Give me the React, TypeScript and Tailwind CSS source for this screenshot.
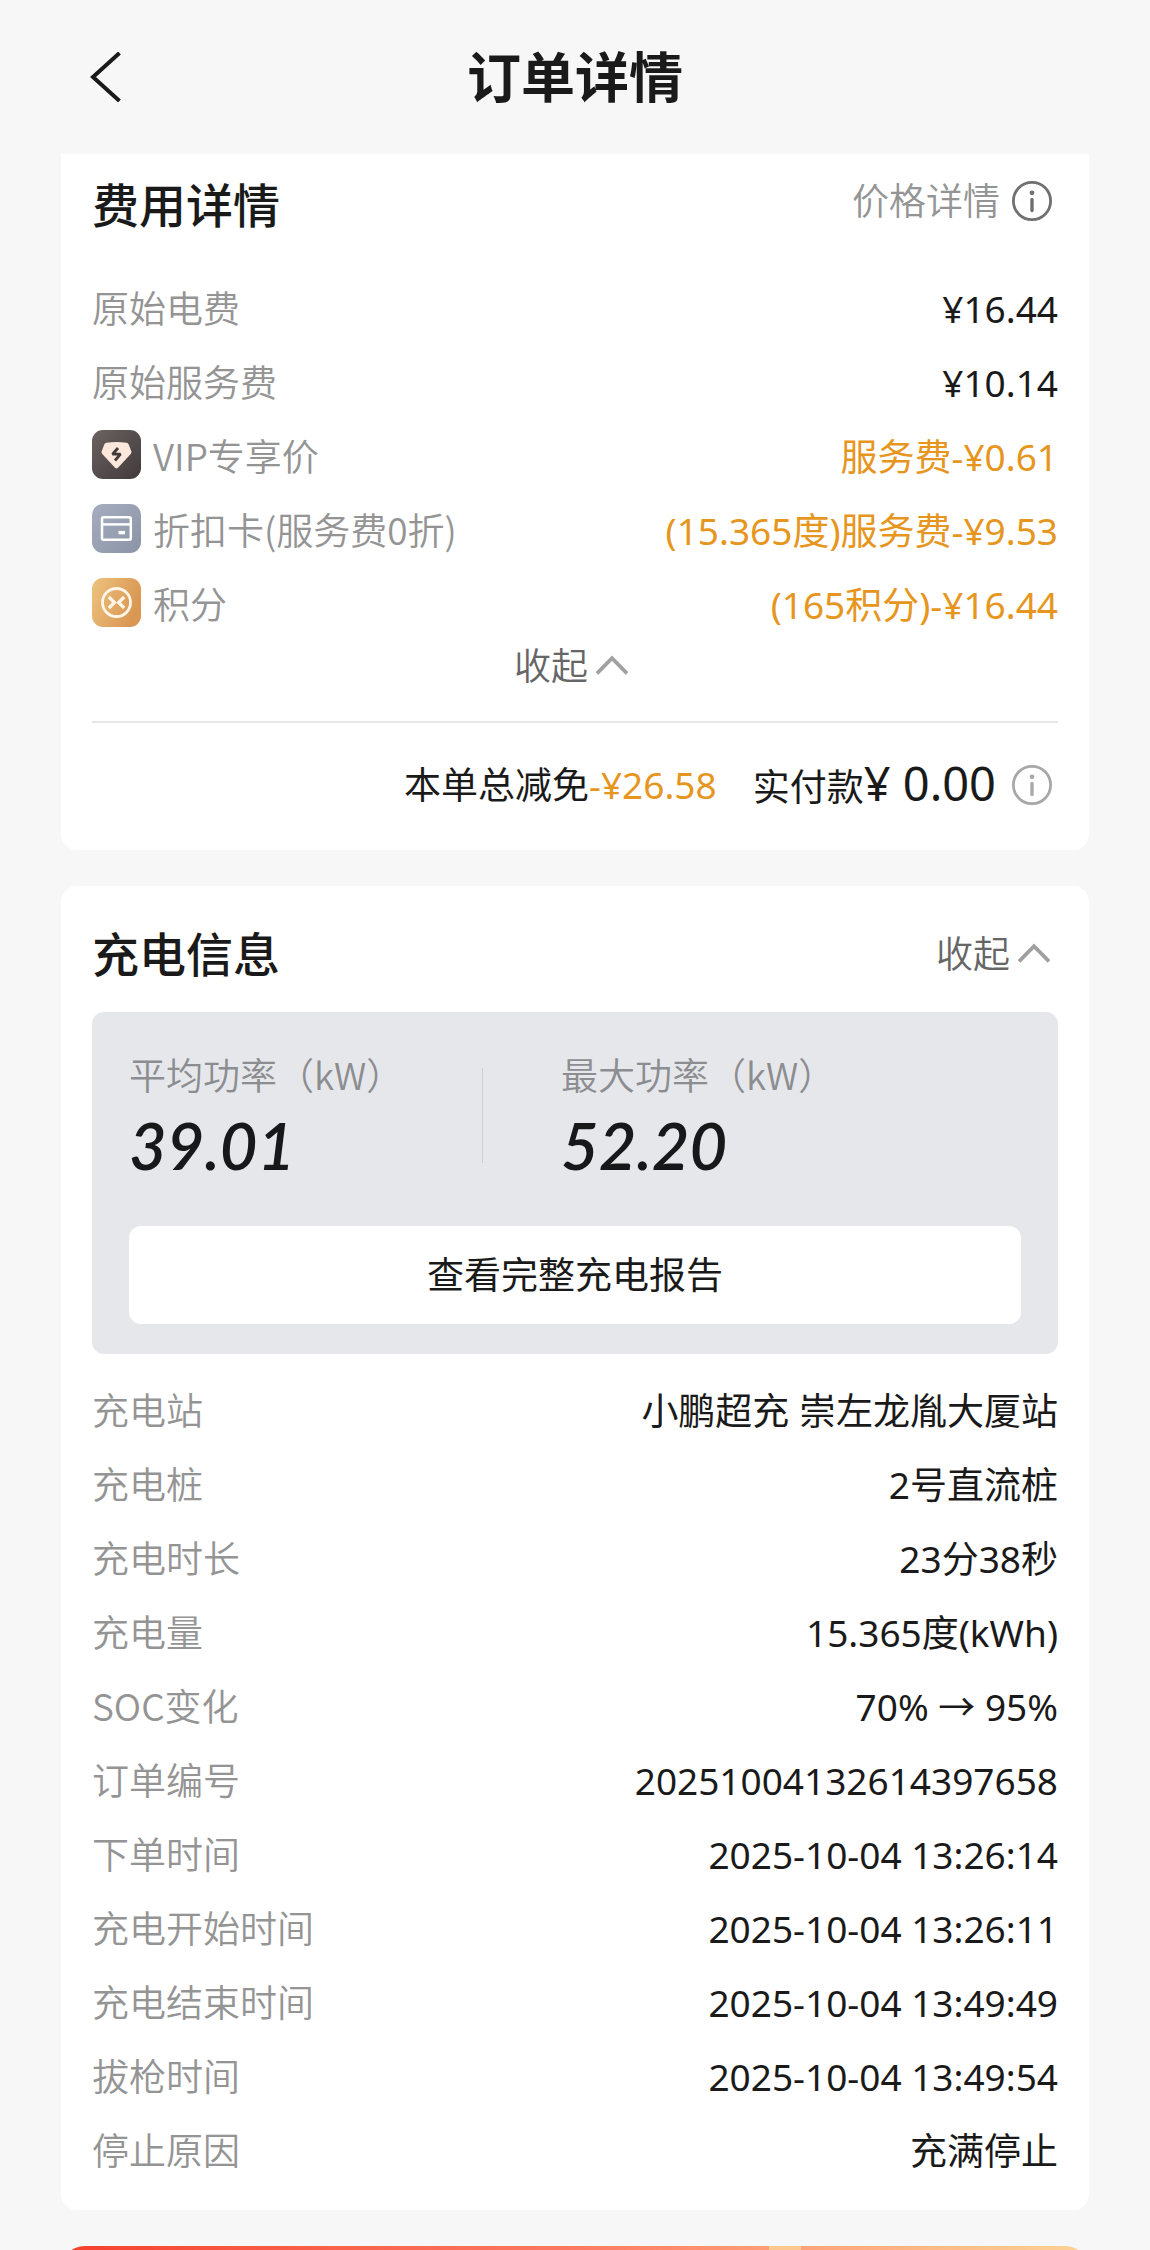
import type { ReactNode } from 'react';

function InfoIcon({ className }: { className: string }) {
  return (
    <svg viewBox="0 0 40 40" className={`size-10 ${className}`} fill="none" stroke="currentColor" aria-hidden="true">
      <circle cx="20" cy="20" r="18.6" strokeWidth="2.8" />
      <circle cx="20" cy="11.8" r="2.4" fill="currentColor" stroke="none" />
      <path d="M20 18.5V29.5" strokeWidth="3.4" strokeLinecap="round" />
    </svg>
  );
}

function ChevronUp() {
  return (
    <svg viewBox="0 0 32 22" className="h-[22px] w-8 text-[#a0a0a0]" fill="none" stroke="currentColor" aria-hidden="true">
      <path d="M1 18.5 16 3.2 31 18.5" strokeWidth="3.8" />
    </svg>
  );
}

function VipIcon() {
  return (
    <svg viewBox="0 0 49 49" className="size-[49px]" aria-hidden="true">
      <defs>
        <linearGradient id="vip" x1="0" y1="0" x2="1" y2="1">
          <stop offset="0" stopColor="#6b6261" />
          <stop offset="1" stopColor="#413a3b" />
        </linearGradient>
      </defs>
      <rect width="49" height="49" rx="11" fill="url(#vip)" />
      <path d="M14.5 12.8Q24.5 11.4 34.5 12.8Q36 13.1 36.7 14.4L39.3 21.2Q39.8 22.8 38.7 24L26 37.8Q24.5 39.4 23 37.8L10.3 24Q9.2 22.8 9.7 21.2L12.3 14.4Q13 13.1 14.5 12.8Z" fill="#fde7da" />
      <path d="M26 18 20.5 24.2 28.5 24.2 23 30.5" fill="none" stroke="#413a3b" strokeWidth="2.8" strokeLinejoin="bevel" />
    </svg>
  );
}

function CardIcon() {
  return (
    <svg viewBox="0 0 49 49" className="size-[49px]" aria-hidden="true">
      <defs>
        <linearGradient id="card" x1="0" y1="0" x2="1" y2="1">
          <stop offset="0" stopColor="#a5adbf" />
          <stop offset="1" stopColor="#8b94a6" />
        </linearGradient>
      </defs>
      <rect width="49" height="49" rx="11" fill="url(#card)" />
      <g fill="none" stroke="#fff" strokeWidth="2.5">
        <rect x="10" y="13.2" width="28.8" height="22.6" rx="1.5" />
        <path d="M10 20.4H38.8" />
        <path d="M26.5 28.6H33" strokeWidth="3.4" />
      </g>
    </svg>
  );
}

function PointsIcon() {
  return (
    <svg viewBox="0 0 49 49" className="size-[49px]" aria-hidden="true">
      <defs>
        <linearGradient id="points" x1="0" y1="0" x2="1" y2="0.4">
          <stop offset="0" stopColor="#edc27e" />
          <stop offset="1" stopColor="#d99753" />
        </linearGradient>
      </defs>
      <rect width="49" height="49" rx="11" fill="url(#points)" />
      <g fill="none" stroke="#fff6e8">
        <circle cx="24.5" cy="24.5" r="14" strokeWidth="2.8" />
        <path d="M16.8 19 22.4 24.5 16.8 30M32.2 19 26.6 24.5 32.2 30" strokeWidth="3.2" />
      </g>
    </svg>
  );
}

type RowData = { label: string; value: string; icon?: ReactNode; accent?: boolean };

const fees: RowData[] = [
  { label: '原始电费', value: '¥16.44' },
  { label: '原始服务费', value: '¥10.14' },
  { label: 'VIP专享价', value: '服务费-¥0.61', icon: <VipIcon />, accent: true },
  { label: '折扣卡(服务费0折)', value: '(15.365度)服务费-¥9.53', icon: <CardIcon />, accent: true },
  { label: '积分', value: '(165积分)-¥16.44', icon: <PointsIcon />, accent: true },
];

const details: RowData[] = [
  { label: '充电站', value: '小鹏超充 崇左龙胤大厦站' },
  { label: '充电桩', value: '2号直流桩' },
  { label: '充电时长', value: '23分38秒' },
  { label: '充电量', value: '15.365度(kWh)' },
  { label: 'SOC变化', value: '70% → 95%' },
  { label: '订单编号', value: '20251004132614397658' },
  { label: '下单时间', value: '2025-10-04 13:26:14' },
  { label: '充电开始时间', value: '2025-10-04 13:26:11' },
  { label: '充电结束时间', value: '2025-10-04 13:49:49' },
  { label: '拔枪时间', value: '2025-10-04 13:49:54' },
  { label: '停止原因', value: '充满停止' },
];

function Row({ label, value, icon, accent }: RowData) {
  return (
    <div className="flex h-[74px] items-center justify-between">
      <dt className="flex items-center gap-3 pb-1 font-['Noto_Sans_CJK_SC',sans-serif] font-[350] text-[#949494]">
        {icon && <span className="pb-0.5">{icon}</span>}
        {label}
      </dt>
      <dd className={accent ? 'text-[#e6961e]' : 'text-[#1a1a1a]'}>{value}</dd>
    </div>
  );
}

function Stat({ label, value }: { label: string; value: string }) {
  return (
    <div>
      <div className="font-['Noto_Sans_CJK_SC',sans-serif] leading-[52px] font-[350] text-[#8c8d90]">{label}</div>
      <div className="font-['Lato',sans-serif] text-[65px] leading-[90px] font-semibold text-[#17181a] italic">{value}</div>
    </div>
  );
}

export default function App() {
  return (
    <div className="flex min-h-screen flex-col bg-[#f7f7f7] px-[61px] font-['Noto_Sans','Noto_Sans_CJK_SC',sans-serif] text-[37px] leading-[54px] text-[#1a1a1a]">
      <header className="grid h-[154px] grid-cols-[1fr_auto_1fr] items-center">
        <button aria-label="返回" className="ml-[29px] w-8">
          <svg viewBox="0 0 32 50" className="h-[50px] w-8" fill="none" stroke="#1a1a1a" strokeWidth="4" aria-hidden="true">
            <path d="M29.5 1 3 25 29.5 49" />
          </svg>
        </button>
        <h1 className="text-[54px] font-bold">订单详情</h1>
      </header>

      <main className="flex flex-col gap-9">
        <section className="rounded-b-2xl bg-white px-[31px]">
          <div className="flex h-[118px] items-start justify-between">
            <h2 className="text-[47px] leading-[102px] font-medium">费用详情</h2>
            <button className="mr-1.5 flex h-[94px] items-center gap-3 font-[350] text-[#949494]">
              价格详情
              <InfoIcon className="text-[#707070]" />
            </button>
          </div>
          <dl>
            {fees.map((f) => (
              <Row key={f.label} {...f} />
            ))}
          </dl>
          <div className="flex justify-center border-b-2 border-[#e6e6e6] pb-[31px]">
            <button className="mr-2 flex h-12 items-center gap-2 font-[350] text-[#666]">
              收起
              <ChevronUp />
            </button>
          </div>
          <div className="flex h-[127px] items-center justify-end pb-1">
            <span>
              本单总减免<span className="text-[#e6961e]">-¥26.58</span>
            </span>
            <span className="ml-9">
              实付款<span className="text-[47px]">¥ 0.00</span>
            </span>
            <button aria-label="实付款说明" className="mr-1.5 ml-4">
              <InfoIcon className="text-[#a8a8a8]" />
            </button>
          </div>
        </section>

        <section className="rounded-2xl bg-white px-[31px] pt-[9px] pb-[22px]">
          <div className="flex h-[117px] items-center justify-between">
            <h2 className="text-[47px] font-medium">充电信息</h2>
            <button className="mr-2 flex items-center gap-2 font-[350] text-[#666]">
              收起
              <ChevronUp />
            </button>
          </div>
          <div className="mb-5 rounded-xl bg-[#e6e7eb] px-[37px] pt-9 pb-[30px]">
            <div className="grid grid-cols-[353fr_1px_78px_460fr]">
              <Stat label="平均功率（kW）" value="39.01" />
              <div className="mt-5 h-[95px] bg-[#cdced2]" />
              <div />
              <Stat label="最大功率（kW）" value="52.20" />
            </div>
            <button className="mt-9 h-[98px] w-full rounded-xl bg-white">查看完整充电报告</button>
          </div>
          <dl>
            {details.map((d) => (
              <Row key={d.label} {...d} />
            ))}
          </dl>
        </section>
      </main>

      <div className="relative mt-9 min-h-1 flex-1 overflow-hidden">
        <div className="absolute inset-x-0 top-0 h-40 rounded-t-3xl bg-linear-to-r from-[#f5402c] via-[#fb7a62] to-[#fbd397]">
          <div className="mr-[28%] ml-auto h-2 w-8 bg-[#fdc890]" />
        </div>
      </div>
    </div>
  );
}
